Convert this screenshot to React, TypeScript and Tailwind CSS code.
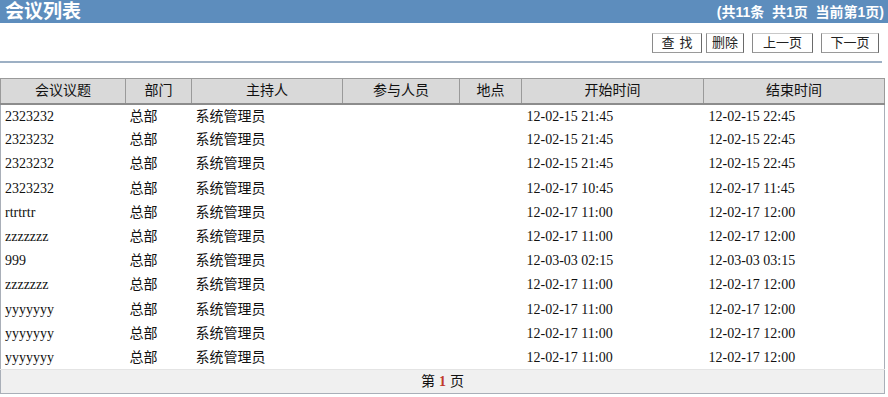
import React from "react";

const rows = [
  ["2323232", "总部", "系统管理员", "", "", "12-02-15 21:45", "12-02-15 22:45"],
  ["2323232", "总部", "系统管理员", "", "", "12-02-15 21:45", "12-02-15 22:45"],
  ["2323232", "总部", "系统管理员", "", "", "12-02-15 21:45", "12-02-15 22:45"],
  ["2323232", "总部", "系统管理员", "", "", "12-02-17 10:45", "12-02-17 11:45"],
  ["rtrtrtr", "总部", "系统管理员", "", "", "12-02-17 11:00", "12-02-17 12:00"],
  ["zzzzzzz", "总部", "系统管理员", "", "", "12-02-17 11:00", "12-02-17 12:00"],
  ["999", "总部", "系统管理员", "", "", "12-03-03 02:15", "12-03-03 03:15"],
  ["zzzzzzz", "总部", "系统管理员", "", "", "12-02-17 11:00", "12-02-17 12:00"],
  ["yyyyyyy", "总部", "系统管理员", "", "", "12-02-17 11:00", "12-02-17 12:00"],
  ["yyyyyyy", "总部", "系统管理员", "", "", "12-02-17 11:00", "12-02-17 12:00"],
  ["yyyyyyy", "总部", "系统管理员", "", "", "12-02-17 11:00", "12-02-17 12:00"],
];

const cols = [
  { title: "会议议题", w: "w-[125px]" },
  { title: "部门", w: "w-[66px]" },
  { title: "主持人", w: "w-[151px]" },
  { title: "参与人员", w: "w-[117px]" },
  { title: "地点", w: "w-[62px]" },
  { title: "开始时间", w: "w-[182px]" },
  { title: "结束时间", w: "w-[181px]" },
];

const Btn = ({ children, className = "" }: { children: React.ReactNode; className?: string }) => (
  <button
    className={`h-[20px] bg-white border border-t-[#c8c8c8] border-l-[#8a8a8a] border-r-[#6a6a6a] border-b-[#9a9a9a] text-[13px] leading-[18px] text-[#222] ${className}`}
  >
    {children}
  </button>
);

export default function App() {
  return (
    <div className="w-[888px] h-[397px] bg-white overflow-hidden font-['Liberation_Sans','Noto_Sans_CJK_SC',sans-serif]">
      <div className="h-[23px] bg-[#5d8dbd] flex items-center justify-between pl-[5px] pr-[4px]">
        <span className="text-white font-bold text-[19px] leading-none">会议列表</span>
        <span className="text-white font-bold text-[14px] leading-none whitespace-pre">(共11条  共1页  当前第1页)</span>
      </div>

      <div className="flex justify-end items-center pr-[9px] mt-[10px] gap-[4px]">
        <Btn className="w-[50px] tracking-[5px] pl-[5px]">查找</Btn>
        <Btn className="w-[38px] mr-[4px]">删除</Btn>
        <Btn className="w-[61px] mr-[4px]">上一页</Btn>
        <Btn className="w-[58px]">下一页</Btn>
      </div>

      <div className="mt-[8px] h-[2px] w-[882px] bg-[#9db0c4]" />

      <table className="mt-[15px] w-[885px] border-collapse border border-[#a9afb8] table-fixed">
        <thead>
          <tr className="h-[25px] bg-[#d9d9d9]">
            {cols.map((c) => (
              <th
                key={c.title}
                className={`${c.w} border border-[#9a9a9a] border-b-2 border-b-[#8c8c8c] font-normal text-[14px] text-[#111] text-center p-0`}
              >
                {c.title}
              </th>
            ))}
          </tr>
        </thead>
        <tbody className="font-['Liberation_Serif','Noto_Sans_CJK_SC',serif] text-[14px] text-[#111]">
          {rows.map((r, i) => (
            <tr key={i} className="h-[24.2px]">
              {r.map((v, j) => (
                <td
                  key={j}
                  className={`p-0 ${j === 0 ? "pl-[4px]" : j >= 5 ? "pl-[5px]" : "pl-[4px]"} whitespace-nowrap`}
                >
                  {v}
                </td>
              ))}
            </tr>
          ))}
          <tr className="h-[24px] bg-[#f0f0f0] border-t border-[#e4e4e4]">
            <td colSpan={7} className="text-center p-0 text-[14px] font-['Liberation_Sans','Noto_Sans_CJK_SC',sans-serif]">
              第 <span className="text-[#c0392b] font-bold font-['Liberation_Serif',serif]">1</span> 页
            </td>
          </tr>
        </tbody>
      </table>
    </div>
  );
}
